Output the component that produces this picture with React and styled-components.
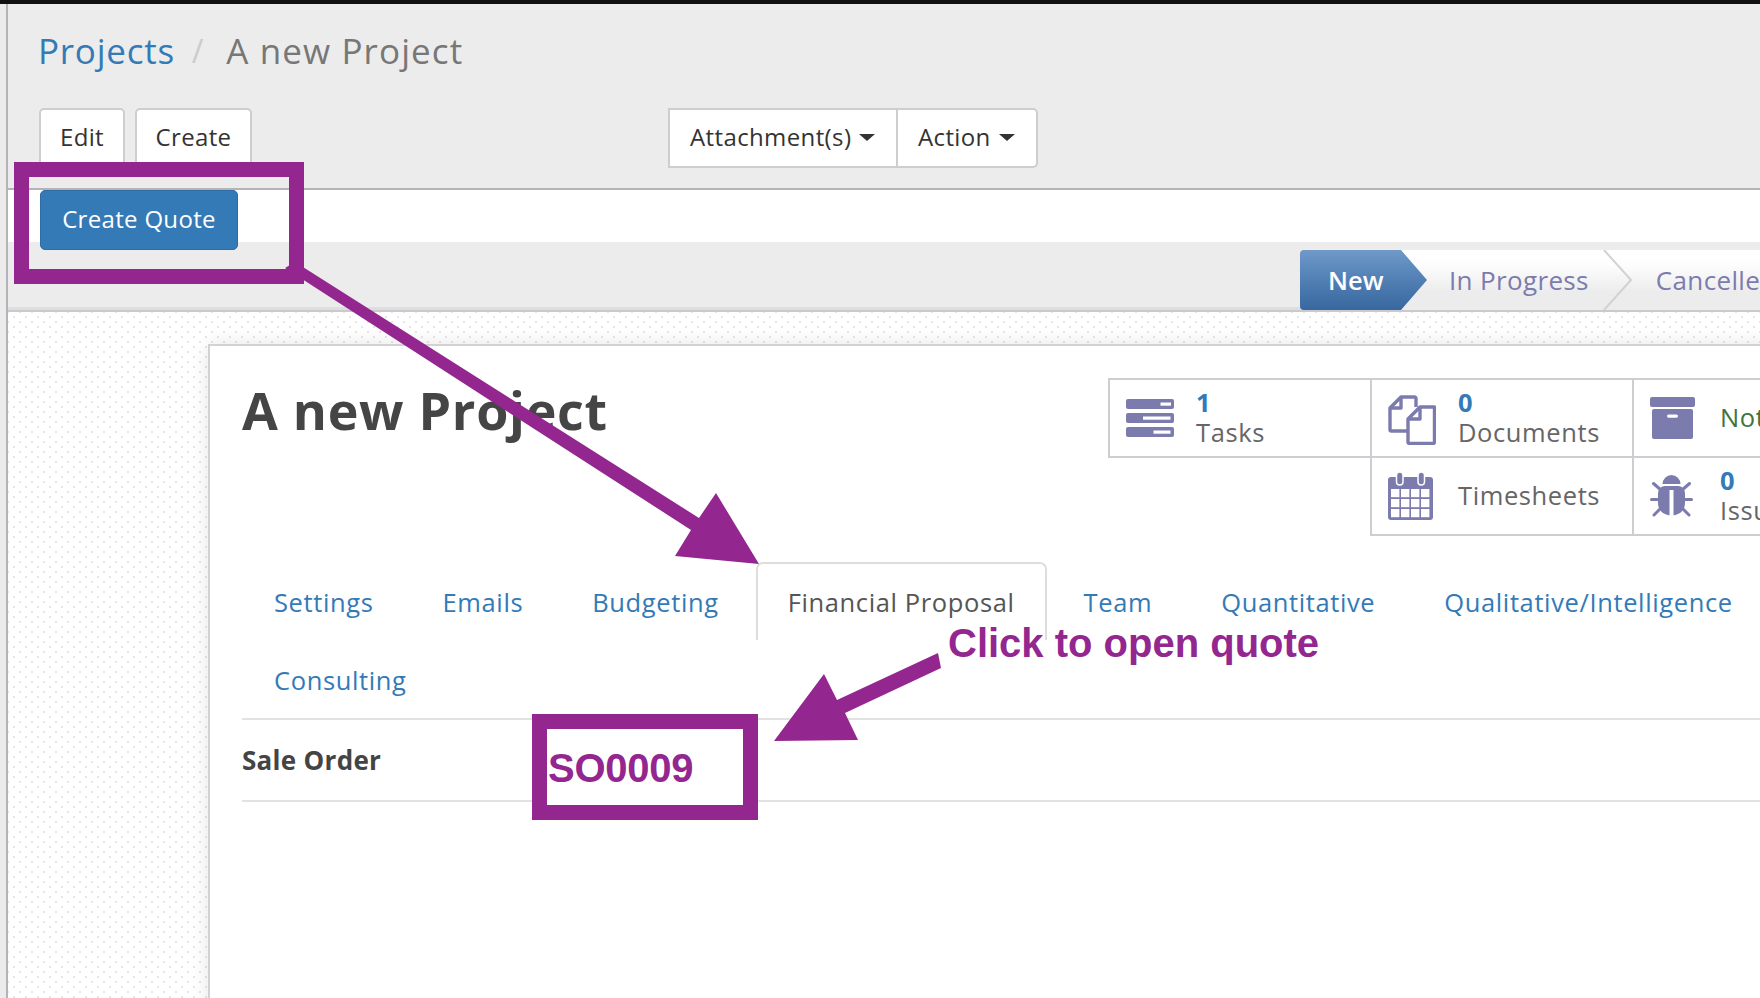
import React from "react";
import styled, { createGlobalStyle } from "styled-components";

const PURPLE = "#93278f";
const ICON = "#7c7bad";
const LINK = "#337ab7";
const LINE = "#cdcdd2";
const FONT = '"Open Sans", "DejaVu Sans", sans-serif';

const Global = createGlobalStyle`
  html, body { margin: 0; padding: 0; height: 100%; overflow: hidden; background: #fff; }
  body { font-family: ${FONT}; }
  * { box-sizing: border-box; }
`;

const Page = styled.div`
  position: relative;
  width: 1760px;
  height: 998px;
  overflow: hidden;
  display: flex;
  border-top: 4px solid #111;
  background: #ececec;
`;
const Rail = styled.div`
  flex: 0 0 8px;
  border-right: 2px solid #b4b4b8;
  background: #ececec;
`;
const Main = styled.div`
  flex: 1;
  min-width: 0;
  display: flex;
  flex-direction: column;
`;
const Header = styled.header`
  height: 186px;
  flex: none;
  padding: 24px 0 0 31px;
  background: #ececec;
  border-bottom: 2px solid #b4b4b8;
`;
const Breadcrumb = styled.div`
  display: flex;
  align-items: center;
  height: 44px;
  margin-left: -1px;
  font-size: 35px;
  letter-spacing: 0.7px;
`;
const Crumb = styled.span`
  color: ${(p) => (p.$current ? "#777" : LINK)};
  letter-spacing: ${(p) => (p.$current ? "1.1px" : "0.75px")};
`;
const CrumbSep = styled.span`
  color: #ccc;
  margin: 0 22px 0 17px;
  font-size: 32px;
`;
const Toolbar = styled.div`
  display: flex;
  margin-top: 36px;
`;
const Left = styled.div`
  display: flex;
  gap: 10px;
  flex: 0 0 629px;
`;
const Btn = styled.button`
  width: ${(p) => p.$w}px;
  height: 60px;
  padding: 0 0 4px;
  font: 400 24px ${FONT};
  letter-spacing: 0.35px;
  color: #333;
  background: #fff;
  border: 2px solid ${LINE};
  border-radius: 5px;
`;
const Group = styled.div`
  display: flex;
  height: 60px;
  background: #fff;
  border: 2px solid ${LINE};
  border-radius: 0 5px 5px 0;
`;
const GroupBtn = styled.div`
  display: flex;
  align-items: center;
  gap: 8px;
  width: ${(p) => p.$w}px;
  padding: 0 0 4px 20px;
  font-size: 24px;
  letter-spacing: 0.38px;
  color: #333;
  border-left: ${(p) => (p.$first ? "0" : `2px solid ${LINE}`)};
`;
const Caret = styled.i`
  width: 0;
  height: 0;
  margin-top: 3px;
  border-left: 8px solid transparent;
  border-right: 8px solid transparent;
  border-top: 7px solid #333;
`;
const ActionBand = styled.div`
  flex: none;
  height: 52px;
  padding-left: 32px;
  background: #fff;
`;
const PrimaryBtn = styled.button`
  position: relative;
  display: block;
  width: 198px;
  height: 60px;
  padding: 0 0 4px;
  font: 400 24px ${FONT};
  letter-spacing: 0.32px;
  color: #fff;
  background: ${LINK};
  border: 1px solid #2e6da4;
  border-radius: 5px;
`;
const StatusBar = styled.div`
  flex: none;
  height: 70px;
  padding: 8px 0 0 1292px;
  display: flex;
  background: #ececec;
  border-bottom: 2px solid #c9c9ce;
  box-shadow: inset 0 -3px 0 #dedede;
`;
const Step = styled.div`
  position: relative;
  flex: none;
  height: 60px;
  display: flex;
  align-items: center;
  font-size: 26px;
  letter-spacing: 0.35px;
  color: ${ICON};
  padding: 0 ${(p) => p.$r}px 0 ${(p) => p.$l}px;
  background: linear-gradient(#fff 0%, #fdfdfd 25%, #ececec 70%, #ececec 100%);
`;
const ActiveStep = styled(Step)`
  z-index: 1;
  color: #fff;
  font-weight: 600;
  font-size: 25.5px;
  letter-spacing: 0;
  width: 127px;
  margin-right: -28px;
  background: linear-gradient(#7099c8 0%, #5c8abd 30%, #4a78ae 65%, #37689f 100%);
  clip-path: polygon(0 0, 101px 0, 127px 50%, 101px 100%, 0 100%);
  border-radius: 4px 0 0 4px;
`;
const Chevron = styled.svg`
  position: absolute;
  right: 0;
  top: 0;
  width: 30px;
  height: 60px;
`;
const Work = styled.div`
  flex: 1;
  min-height: 0;
  overflow: hidden;
  display: flex;
  align-items: flex-start;
  padding: 32px 0 0 200px;
  background-color: #fff;
  background-image: radial-gradient(circle, #e6e6e6 1px, transparent 1.3px),
    radial-gradient(circle, #e6e6e6 1px, transparent 1.3px);
  background-size: 12px 10px;
  background-position: 0 0, 6px 5px;
`;
const Sheet = styled.section`
  flex: none;
  width: 1800px;
  height: 760px;
  padding: 0 0 0 32px;
  background: #fff;
  border: 2px solid #d2d2d6;
  border-right: 0;
  box-shadow: 0 0 18px rgba(0, 0, 0, 0.1);
`;
const Top = styled.div`
  display: flex;
  height: 216px;
`;
const Title = styled.h1`
  flex: 0 0 866px;
  margin: 34px 0 0;
  font-size: 52px;
  font-weight: 700;
  line-height: 60px;
  letter-spacing: 0.7px;
  color: #454545;
`;
const Stats = styled.div`
  display: grid;
  grid-template-columns: repeat(3, 262px);
  grid-template-rows: repeat(2, 78px);
  margin-top: 32px;
  height: 158px;
`;
const Stat = styled.div`
  display: flex;
  align-items: center;
  margin: 0 -2px -2px 0;
  padding-left: 16px;
  border: ${(p) => (p.$blank ? "0" : `2px solid ${LINE}`)};
`;
const IconBox = styled.div`
  flex: 0 0 70px;
  display: flex;
  align-items: center;
  padding-top: ${(p) => p.$dy || 0}px;
`;
const StatText = styled.div`
  display: flex;
  flex-direction: column;
  margin-top: -2px;
  font-size: 25.5px;
  line-height: 30px;
  letter-spacing: 0.6px;
  color: ${(p) => (p.$green ? "#3c763d" : "#666")};
  white-space: nowrap;
`;
const Count = styled.b`
  color: ${LINK};
  font-weight: 700;
`;
const Tabs = styled.nav`
  display: flex;
  flex-wrap: wrap;
  width: 1560px;
`;
const Tab = styled.div`
  height: 78px;
  margin-right: 5px;
  padding: 0 30px;
  display: flex;
  align-items: center;
  font-size: 25.5px;
  letter-spacing: 0.62px;
  white-space: nowrap;
  color: ${(p) => (p.$active ? "#555" : LINK)};
  border: 2px solid ${(p) => (p.$active ? "#ddd" : "transparent")};
  border-bottom: 0;
  border-radius: 7px 7px 0 0;
`;
const TabBreak = styled.div`
  flex: 0 0 100%;
  height: 0;
`;
const FormRow = styled.div`
  display: flex;
  align-items: center;
  width: 1518px;
  height: 84px;
  border-top: 2px solid #e2e2e2;
  border-bottom: 2px solid #e2e2e2;
`;
const Label = styled.div`
  font-size: 26px;
  font-weight: 700;
  letter-spacing: 0.3px;
  color: #444;
`;
const Callout = styled.div`
  position: absolute;
  left: ${(p) => p.$x}px;
  top: ${(p) => p.$y}px;
  width: ${(p) => p.$w}px;
  height: ${(p) => p.$h}px;
  border: 15px solid ${PURPLE};
  background: ${(p) => (p.$fill ? "#fff" : "transparent")};
  display: flex;
  align-items: center;
`;
const AnnoText = styled.span`
  font: 700 40px/46px "Liberation Sans", Arial, sans-serif;
  color: ${PURPLE};
  white-space: nowrap;
`;
const OrderText = styled(AnnoText)`
  margin: 2px 0 0 1px;
  letter-spacing: -0.25px;
`;
const FloatNote = styled(AnnoText)`
  position: absolute;
  left: 948px;
  top: 620px;
`;
const Arrows = styled.svg`
  position: absolute;
  left: 0;
  top: 0;
  width: 1760px;
  height: 998px;
  pointer-events: none;
`;
const Overlay = styled.div`
  position: absolute;
  left: 0;
  top: -4px;
  width: 1760px;
  height: 998px;
`;

const TasksIcon = () => (
  <svg width="48" height="38" viewBox="0 0 48 38">
    <g fill={ICON}>
      <rect y="0" width="48" height="10" rx="2" />
      <rect y="14" width="48" height="10" rx="2" />
      <rect y="28" width="48" height="10" rx="2" />
    </g>
    <g fill="#fff">
      <rect x="34.5" y="3.5" width="10.5" height="3.2" />
      <rect x="17" y="17.5" width="27.5" height="3.2" />
      <rect x="27.5" y="31.5" width="17" height="3.2" />
    </g>
  </svg>
);
const DocsIcon = () => (
  <svg width="48" height="50" viewBox="0 0 48 50" fill="none" stroke={ICON} strokeWidth="3.4" strokeLinejoin="round">
    <path d="M28 12V3.5a1.5 1.5 0 0 0-1.5-1.5H13L2 13v21.5A1.5 1.5 0 0 0 3.500 36H19" />
    <path d="M13 2v11H2" />
    <path d="M46.500 12H32L20 24v23.500a1.500 1.500 0 0 0 1.500 1H45a1.500 1.500 0 0 0 1.500-1.500z" />
    <path d="M32 12v12H20" />
  </svg>
);
const ArchiveIcon = () => (
  <svg width="45" height="42" viewBox="0 0 45 42">
    <rect width="45" height="10" rx="2" fill={ICON} />
    <rect x="2" y="12" width="41" height="30" rx="2" fill={ICON} />
    <rect x="17" y="17.500" width="11" height="3.200" rx="1.600" fill="#fff" />
  </svg>
);
const CalendarIcon = () => {
  const cells = [];
  for (let r = 0; r < 3; r++) {
    for (let c = 0; c < 4; c++) {
      cells.push(<rect key={`${r}-${c}`} x={3 + c * 10} y={17 + r * 10} width="8.400" height="8.200" fill="#fff" />);
    }
  }
  return (
    <svg width="45" height="48" viewBox="0 0 45 48">
      <rect y="5" width="45" height="43" rx="3" fill={ICON} />
      {cells}
      <g fill={ICON} stroke="#fff" strokeWidth="1.500">
        <rect x="8.500" y="0" width="6.500" height="13" rx="3.250" />
        <rect x="30" y="0" width="6.500" height="13" rx="3.250" />
      </g>
    </svg>
  );
};
const BugIcon = () => (
  <svg width="43" height="43" viewBox="0 0 43 43">
    <path d="M12.500 9a9 9 0 0 1 18 0z" fill={ICON} />
    <path d="M8 18a7 7 0 0 1 7-7h13a7 7 0 0 1 7 7v10c0 7-5 12-13 12.500h-1C13 40 8 35 8 28z" fill={ICON} />
    <rect x="19.500" y="15" width="4" height="26" fill="#fff" />
    <g stroke={ICON} strokeWidth="3" strokeLinecap="round">
      <path d="M3.500 8.500l8 7M39.500 8.500l-8 7M1.500 24.500h8M41.500 24.500h-8M4 40l7.500-7.500M39 40l-7.500-7.500" />
    </g>
  </svg>
);

const leadingTabs = ["Settings", "Emails", "Budgeting"];
const trailingTabs = ["Team", "Quantitative", "Qualitative/Intelligence"];

export default function App() {
  return (
    <>
      <Global />
      <Page>
        <Rail />
        <Main>
          <Header>
            <Breadcrumb>
              <Crumb>Projects</Crumb>
              <CrumbSep>/</CrumbSep>
              <Crumb $current>A new Project</Crumb>
            </Breadcrumb>
            <Toolbar>
              <Left>
                <Btn $w={86}>Edit</Btn>
                <Btn $w={117}>Create</Btn>
              </Left>
              <Group>
                <GroupBtn $first $w={226}>
                  Attachment(s) <Caret />
                </GroupBtn>
                <GroupBtn $w={140}>
                  Action <Caret />
                </GroupBtn>
              </Group>
            </Toolbar>
          </Header>
          <ActionBand>
            <PrimaryBtn>Create Quote</PrimaryBtn>
          </ActionBand>
          <StatusBar>
            <ActiveStep $l={28} $r={0}>New</ActiveStep>
            <Step $l={50} $r={44}>
              In Progress
              <Chevron viewBox="0 0 30 60">
                <path d="M1 0l27 30L1 60" fill="none" stroke="#d2d2d2" strokeWidth="2" />
              </Chevron>
            </Step>
            <Step $l={23} $r={40}>Cancelled</Step>
          </StatusBar>
          <Work>
            <Sheet>
              <Top>
                <Title>A new Project</Title>
                <Stats>
                  <Stat>
                    <IconBox><TasksIcon /></IconBox>
                    <StatText><Count>1</Count>Tasks</StatText>
                  </Stat>
                  <Stat>
                    <IconBox $dy={3}><DocsIcon /></IconBox>
                    <StatText><Count>0</Count>Documents</StatText>
                  </Stat>
                  <Stat>
                    <IconBox><ArchiveIcon /></IconBox>
                    <StatText $green>Not Archived</StatText>
                  </Stat>
                  <Stat $blank />
                  <Stat>
                    <IconBox><CalendarIcon /></IconBox>
                    <StatText>Timesheets</StatText>
                  </Stat>
                  <Stat>
                    <IconBox><BugIcon /></IconBox>
                    <StatText><Count>0</Count>Issues</StatText>
                  </Stat>
                </Stats>
              </Top>
              <Tabs>
                {leadingTabs.map((t) => (
                  <Tab key={t}>{t}</Tab>
                ))}
                <Tab $active>Financial Proposal</Tab>
                {trailingTabs.map((t) => (
                  <Tab key={t}>{t}</Tab>
                ))}
                <TabBreak />
                <Tab>Consulting</Tab>
              </Tabs>
              <FormRow>
                <Label>Sale Order</Label>
              </FormRow>
            </Sheet>
          </Work>
        </Main>
        <Overlay>
          <Arrows viewBox="0 0 1760 998">
            <g fill={PURPLE}>
              <polygon points="295,262 699,518 716,493 759,564 675,556 691,530 285,268" />
              <polygon points="938,653 837,700 824,674 774,741 858,740 845,713 941,668" />
            </g>
          </Arrows>
          <Callout $x={14} $y={162} $w={290} $h={122} />
          <Callout $x={532} $y={714} $w={226} $h={106} $fill>
            <OrderText>SO0009</OrderText>
          </Callout>
          <FloatNote>Click to open quote</FloatNote>
        </Overlay>
      </Page>
    </>
  );
}
